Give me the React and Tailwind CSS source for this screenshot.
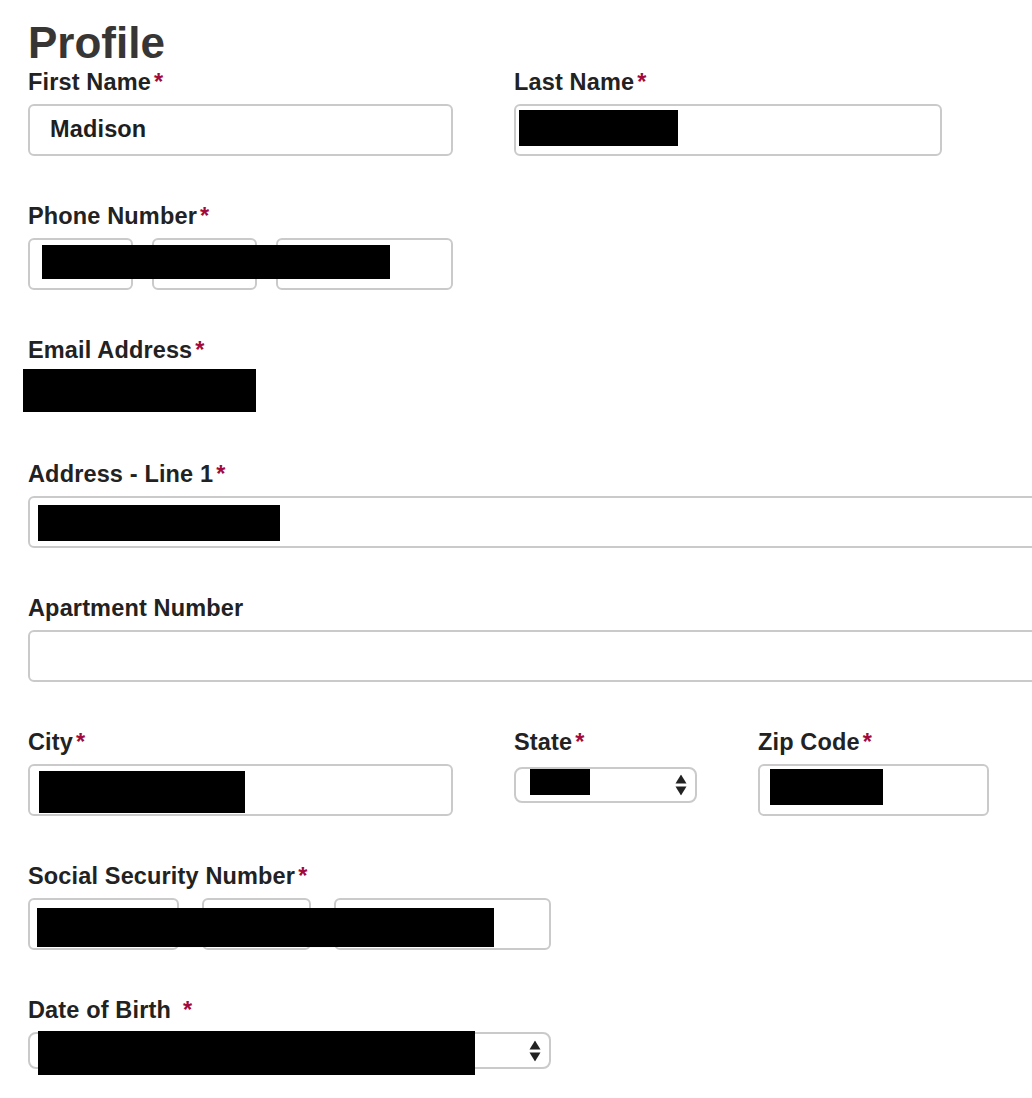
import React from 'react';

const font = { fontFamily: '"Liberation Sans", Arial, Helvetica, sans-serif' };

function Label({ children, required, wide }) {
  return (
    <div className="h-[28px] whitespace-nowrap text-[23.5px] font-bold leading-[28px] tracking-[0.15px] text-[#222222]">
      {children}
      {required && (
        <span className={wide ? 'ml-[12px] text-[#a10b3b]' : 'ml-[3px] text-[#a10b3b]'}>*</span>
      )}
    </div>
  );
}

function Box({ className, children }) {
  return (
    <div
      className={`relative box-border h-[52px] rounded-[6px] border-2 border-[#cacaca] bg-white ${className}`}
    >
      {children}
    </div>
  );
}

function Arrows() {
  return (
    <svg width="12" height="21" viewBox="0 0 12 21" className="absolute right-[8px] top-1/2 -translate-y-1/2">
      <path d="M6 0 L11.5 9 L0.5 9 Z" fill="#222" />
      <path d="M0.5 12 L11.5 12 L6 21 Z" fill="#222" />
    </svg>
  );
}

export default function App() {
  return (
    <div className="h-[1098px] w-[1032px] overflow-hidden bg-white pl-[28px] pt-[18px]" style={font}>
      <h1 className="h-[50px] text-[44px] font-bold leading-[50px] text-[#383635]">Profile</h1>

      <div className="flex flex-col gap-[46px]">
        {/* Name row */}
        <div className="flex">
          <div className="w-[486px]">
            <Label required>First Name</Label>
            <Box className="mt-[8px] w-[425px]">
              <div className="flex h-full items-center pl-[20px] text-[23.5px] font-bold tracking-[0.15px] text-[#1e1e1e]">
                Madison
              </div>
            </Box>
          </div>
          <div>
            <Label required>Last Name</Label>
            <Box className="mt-[8px] w-[428px]">
              <div className="absolute left-[3px] top-[4px] h-[36px] w-[159px] bg-black" />
            </Box>
          </div>
        </div>

        {/* Phone */}
        <div>
          <Label required>Phone Number</Label>
          <div className="relative mt-[8px] flex gap-[19px]">
            <Box className="w-[105px]" />
            <Box className="w-[105px]" />
            <Box className="w-[177px]" />
            <div className="absolute left-[14px] top-[7px] h-[34px] w-[348px] bg-black" />
          </div>
        </div>

        {/* Email */}
        <div>
          <Label required>Email Address</Label>
          <div className="h-[50px] pt-[5px]">
            <div className="-ml-[5px] h-[43px] w-[233px] bg-black" />
          </div>
        </div>

        {/* Address */}
        <div>
          <Label required>Address - Line 1</Label>
          <Box className="mt-[8px] w-[1020px]">
            <div className="absolute left-[8px] top-[7px] h-[36px] w-[242px] bg-black" />
          </Box>
        </div>

        <div>
          <Label>Apartment Number</Label>
          <Box className="mt-[8px] w-[1020px]" />
        </div>

        {/* City / State / Zip */}
        <div className="flex">
          <div className="w-[486px]">
            <Label required>City</Label>
            <Box className="mt-[8px] w-[425px]">
              <div className="absolute left-[9px] top-[5px] h-[42px] w-[206px] bg-black" />
            </Box>
          </div>
          <div className="w-[244px]">
            <Label required>State</Label>
            <div className="relative mt-[11px] box-border h-[36px] w-[183px] rounded-[8px] border-2 border-[#cacaca] bg-white">
              <div className="absolute left-[14px] top-0 h-[26px] w-[60px] bg-black" />
              <Arrows />
            </div>
          </div>
          <div>
            <Label required>Zip Code</Label>
            <Box className="mt-[8px] w-[231px]">
              <div className="absolute left-[10px] top-[3px] h-[36px] w-[113px] bg-black" />
            </Box>
          </div>
        </div>

        {/* SSN */}
        <div>
          <Label required>Social Security Number</Label>
          <div className="relative mt-[8px] flex gap-[23px]">
            <Box className="w-[151px]" />
            <Box className="w-[109px]" />
            <Box className="w-[217px]" />
            <div className="absolute left-[9px] top-[10px] h-[39px] w-[457px] bg-black" />
          </div>
        </div>

        {/* DOB */}
        <div>
          <Label required wide>Date of Birth</Label>
          <div className="relative mt-[8px] h-[44px]">
            <div className="relative mt-[2px] box-border h-[37px] w-[523px] rounded-[8px] border-2 border-[#cacaca] bg-white">
              <Arrows />
            </div>
            <div className="absolute -top-[1px] left-[10px] h-[44px] w-[437px] bg-black" />
          </div>
        </div>
      </div>
    </div>
  );
}
